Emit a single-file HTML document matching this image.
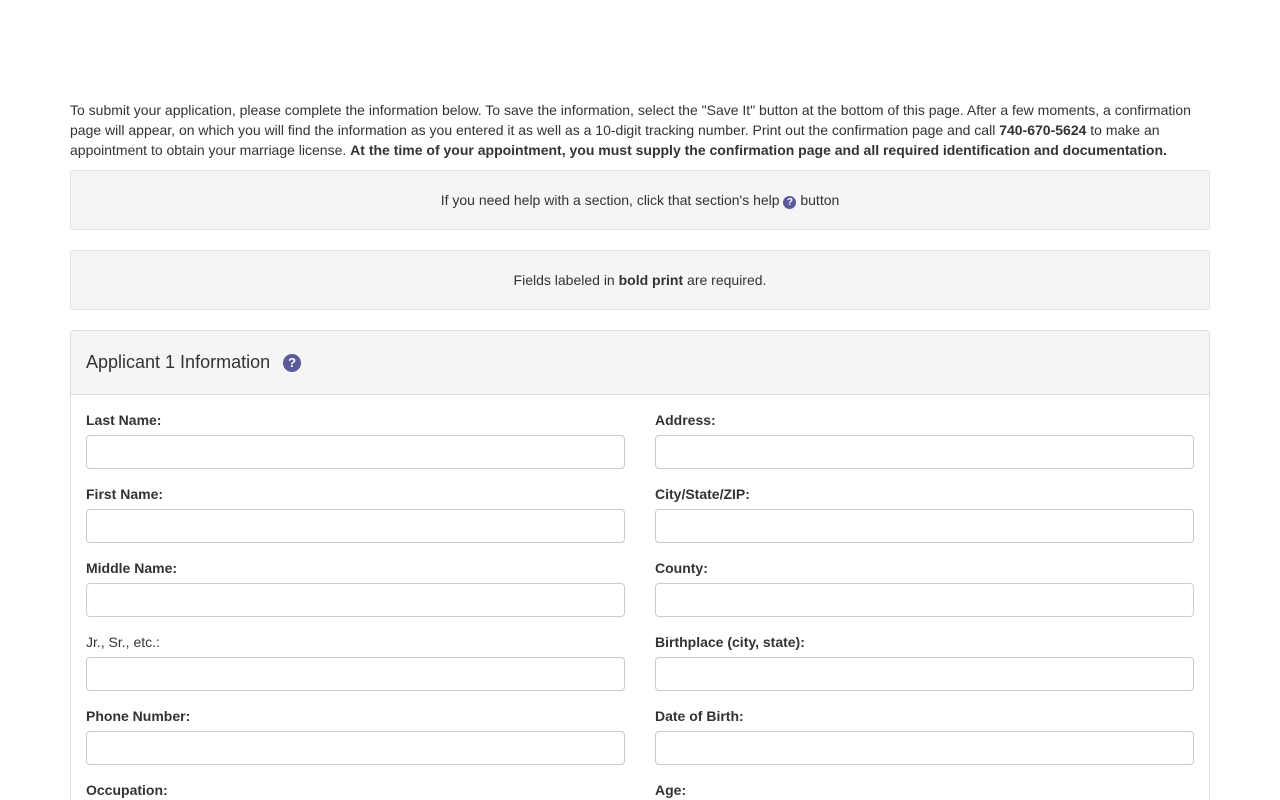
<!DOCTYPE html>
<html><head><style>
html,body{margin:0;height:800px;overflow:hidden}
body{font-family:"Liberation Sans",sans-serif;font-size:14px;color:#333;background:#fff}
#w{position:relative;width:1280px;height:800px;overflow:hidden}
.c{position:absolute;left:70px;width:1140px}
p{margin:0;line-height:20px}
.well{position:absolute;left:70px;width:1138px;height:58px;background:#f5f5f5;border:1px solid #e3e3e3;border-radius:3px;text-align:center;line-height:58px}
.q{display:inline-block;width:13px;height:13px;border-radius:50%;background:#5b5b9b;color:#fff;font-size:10px;font-weight:bold;line-height:13px;text-align:center;vertical-align:0px}
.panel{position:absolute;left:70px;top:330px;width:1138px;height:500px;border:1px solid #ddd;border-radius:4px;overflow:hidden}
.ph{height:63px;background:#f5f5f5;border-bottom:1px solid #ddd;font-size:18px;line-height:63px;padding-left:15px}
.ph .q{width:18px;height:18px;font-size:13px;line-height:18px;margin-left:8px;vertical-align:1px}
.f{position:absolute;width:539px}
.f label{display:block;font-weight:bold;line-height:20px;height:25px}
.f label.n{font-weight:normal}
.f div{height:32px;border:1px solid #ccc;border-radius:4px}
</style></head><body><div id="w">
<div class="c" style="top:100px"><p>To submit your application, please complete the information below. To save the information, select the "Save It" button at the bottom of this page. After a few moments, a confirmation page will appear, on which you will find the information as you entered it as well as a 10-digit tracking number. Print out the confirmation page and call <b>740-670-5624</b> to make an appointment to obtain your marriage license. <b>At the time of your appointment, you must supply the confirmation page and all required identification and documentation.</b></p></div>
<div class="well" style="top:170px">If you need help with a section, click that section's help <span class="q">?</span> button</div>
<div class="well" style="top:250px">Fields labeled in <b>bold print</b> are required.</div>
<div class="panel"><div class="ph">Applicant 1 Information <span class="q">?</span></div></div>
<div class="f" style="left:86px;top:410px"><label>Last Name:</label><div></div></div>
<div class="f" style="left:655px;top:410px"><label>Address:</label><div></div></div>
<div class="f" style="left:86px;top:484px"><label>First Name:</label><div></div></div>
<div class="f" style="left:655px;top:484px"><label>City/State/ZIP:</label><div></div></div>
<div class="f" style="left:86px;top:558px"><label>Middle Name:</label><div></div></div>
<div class="f" style="left:655px;top:558px"><label>County:</label><div></div></div>
<div class="f" style="left:86px;top:632px"><label class="n">Jr., Sr., etc.:</label><div></div></div>
<div class="f" style="left:655px;top:632px"><label>Birthplace (city, state):</label><div></div></div>
<div class="f" style="left:86px;top:706px"><label>Phone Number:</label><div></div></div>
<div class="f" style="left:655px;top:706px"><label>Date of Birth:</label><div></div></div>
<div class="f" style="left:86px;top:780px"><label>Occupation:</label><div></div></div>
<div class="f" style="left:655px;top:780px"><label>Age:</label><div></div></div>
</div></body></html>
